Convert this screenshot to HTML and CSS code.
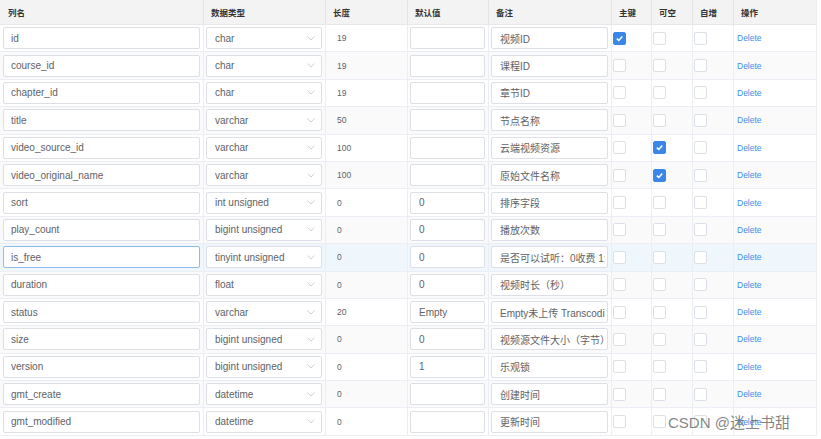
FILE: index.html
```html
<!DOCTYPE html>
<html lang="zh">
<head>
<meta charset="utf-8">
<link rel="stylesheet" href="styles.css">
</head>
<body>
<div class="table">
  <div class="row head">
    <div class="cell">列名</div><div class="cell">数据类型</div><div class="cell">长度</div><div class="cell">默认值</div><div class="cell">备注</div><div class="cell">主键</div><div class="cell">可空</div><div class="cell">自增</div><div class="cell">操作</div>
  </div>
  <div id="rows"></div>
</div>
<div class="watermark">CSDN @迷上书甜</div>
<script src="app.js"></script>
</body>
</html>
```
FILE: app.js
```js
var data = [
  ["id","char","19","","视频ID",1,0,0],
  ["course_id","char","19","","课程ID",0,0,0],
  ["chapter_id","char","19","","章节ID",0,0,0],
  ["title","varchar","50","","节点名称",0,0,0],
  ["video_source_id","varchar","100","","云端视频资源",0,1,0],
  ["video_original_name","varchar","100","","原始文件名称",0,1,0],
  ["sort","int unsigned","0","0","排序字段",0,0,0],
  ["play_count","bigint unsigned","0","0","播放次数",0,0,0],
  ["is_free","tinyint unsigned","0","0","是否可以试听：0收费 1免费",0,0,0],
  ["duration","float","0","0","视频时长（秒）",0,0,0],
  ["status","varchar","20","Empty","Empty未上传 Transcoding转码中 Normal正常",0,0,0],
  ["size","bigint unsigned","0","0","视频源文件大小（字节）",0,0,0],
  ["version","bigint unsigned","0","1","乐观锁",0,0,0],
  ["gmt_create","datetime","0","","创建时间",0,0,0],
  ["gmt_modified","datetime","0","","更新时间",0,0,0]
];
var chev = '<svg class="chev" width="8" height="5" viewBox="0 0 8 5"><path d="M0.5 0.5 L4 4 L7.5 0.5" fill="none" stroke="#c8cbd1" stroke-width="0.9"/></svg>';
function box(on) {
  return '<div class="cell cb"><span class="check' + (on ? ' on' : '') + '">' +
    (on ? '<svg width="9" height="9" viewBox="0 0 9 9"><path d="M1.8 4.6 L3.8 6.4 L7.3 2.6" fill="none" stroke="#fff" stroke-width="1.5"/></svg>' : '') +
    '</span></div>';
}
var html = '';
data.forEach(function (r, i) {
  var cls = 'row' + (i % 2 ? ' alt' : '') + (i === 8 ? ' hover' : '');
  html += '<div class="' + cls + '">' +
    '<div class="cell"><input class="inp name' + (i === 8 ? ' focus' : '') + '" value="' + r[0] + '"></div>' +
    '<div class="cell"><div class="sel"><span>' + r[1] + '</span>' + chev + '</div></div>' +
    '<div class="cell len">' + r[2] + '</div>' +
    '<div class="cell"><input class="inp" value="' + r[3] + '"></div>' +
    '<div class="cell"><input class="inp" value="' + r[4] + '"></div>' +
    box(r[5]) + box(r[6]) + box(r[7]) +
    '<div class="cell op"><a class="del">Delete</a></div>' +
    '</div>';
});
document.getElementById('rows').innerHTML = html;
```
FILE: styles.css
```css
* { box-sizing: border-box; }
body {
  margin: 0;
  background: #fff;
  font-family: "Liberation Sans", "Noto Sans CJK SC", sans-serif;
  color: #606266;
}
.table {
  width: 817px;
  border-right: 1px solid #ebeef5;
}
.row {
  display: grid;
  grid-template-columns: 204px 122px 82px 81px 123px 40px 41px 41px 82px;
  height: 27.4px;
  border-bottom: 1px solid #ebeef5;
  background: #fff;
}
.row.alt { background: #fafafa; }
.row.hover { background: #f0f7fc; }
.row.head {
  height: 25px;
  background: #f3f3f3;
  border-bottom: 1px solid #e8e8e8;
}
.cell {
  display: flex;
  align-items: center;
  padding: 0 3px 0 2px;
  border-right: 1px solid #ebeef5;
  min-width: 0;
}
.cell:last-child { border-right: none; }
.row .cell:first-child { padding: 0 3px 0 3px; }
.head .cell {
  font-size: 8.5px;
  font-weight: bold;
  color: #333;
  padding-left: 7px;
  border-right-color: #e4e4e4;
}
.head .cell:first-child { padding-left: 8px; }
.inp {
  width: 100%;
  height: 22px;
  border: 1px solid #dcdfe6;
  border-radius: 2px;
  background: #fff;
  padding: 0 2px 0 8px;
  font-family: "Liberation Sans", "Noto Sans CJK SC", sans-serif;
  font-size: 10px;
  color: #606266;
  outline: none;
}
.inp.name { padding-left: 7px; }
.inp.focus { border-color: #8fbdea; }
.sel {
  width: 100%;
  height: 22px;
  border: 1px solid #dcdfe6;
  border-radius: 2px;
  background: #fff;
  display: flex;
  align-items: center;
  justify-content: space-between;
  padding: 0 6px 0 8px;
  font-size: 10px;
  color: #606266;
}
.chev { display: block; }
.len {
  padding-left: 11px;
  font-size: 8.5px;
  color: #606266;
}
.cb { padding-left: 1px; }
.check {
  width: 13px;
  height: 13px;
  border: 1px solid #dcdfe6;
  border-radius: 2px;
  background: #fff;
  display: flex;
  align-items: center;
  justify-content: center;
}
.check.on {
  background: #3b87e8;
  border-color: #3b87e8;
}
.op { padding-left: 3px; }
.del {
  font-size: 8.5px;
  color: #3f8ee6;
}
.watermark {
  position: absolute;
  left: 668px;
  top: 411px;
  font-size: 15px;
  color: rgba(110, 110, 110, 0.85);
  font-family: "Liberation Sans", "Noto Sans CJK SC", sans-serif;
  white-space: nowrap;
}
```
